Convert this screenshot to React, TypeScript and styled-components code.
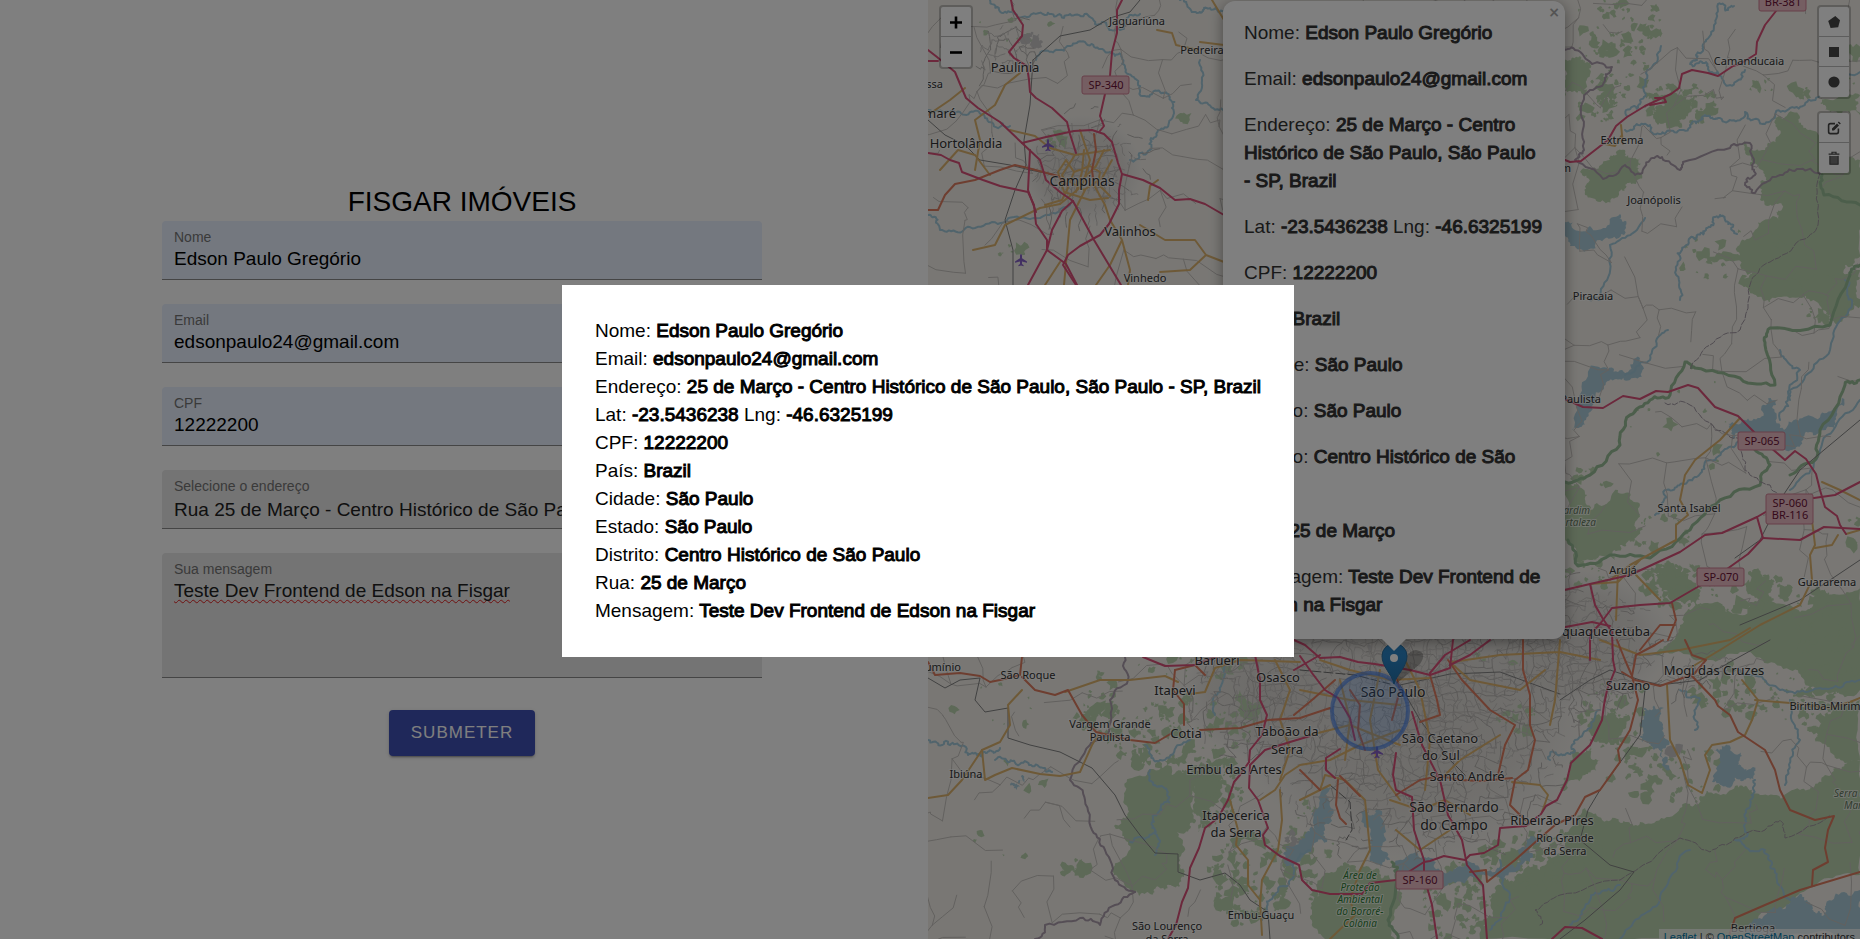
import React from "react";
import styled, { createGlobalStyle, css } from "styled-components";

/* ---------- data ---------- */

type Pair = [label: string, value: string];
type Entry = Pair[];

const entries: Entry[] = [
  [["Nome", "Edson Paulo Gregório"]],
  [["Email", "edsonpaulo24@gmail.com"]],
  [["Endereço", "25 de Março - Centro Histórico de São Paulo, São Paulo - SP, Brazil"]],
  [["Lat", "-23.5436238"], ["Lng", "-46.6325199"]],
  [["CPF", "12222200"]],
  [["País", "Brazil"]],
  [["Cidade", "São Paulo"]],
  [["Estado", "São Paulo"]],
  [["Distrito", "Centro Histórico de São Paulo"]],
  [["Rua", "25 de Março"]],
  [["Mensagem", "Teste Dev Frontend de Edson na Fisgar"]],
];

/* ---------- page ---------- */

const GlobalStyle = createGlobalStyle`
  *, *::before, *::after { box-sizing: border-box; }
  body {
    margin: 0;
    overflow: hidden;
    background: #fff;
    color: #000;
    font: 19px/28px "Liberation Sans", Arial, sans-serif;
  }
  p { margin: 0; }
`;

const Page = styled.div`
  display: grid;
  grid-template-columns: calc(50% - 2px) 1fr;
  min-height: 100vh;
`;

const FormPanel = styled.main`
  display: flex;
  align-items: center;
  justify-content: center;
  padding: 0 28px 0 24px;
`;

const Form = styled.form`
  display: flex;
  flex-direction: column;
  width: 100%;
  max-width: 600px;
`;

const Title = styled.h1`
  margin: 0;
  font-size: 28px;
  line-height: 38px;
  font-weight: 400;
  text-align: center;
`;

const Fields = styled.div`
  display: grid;
  gap: 24px;
  margin-bottom: 32px;
`;

const Field = styled.div<{ $filled?: boolean }>`
  display: flex;
  flex-direction: column;
  gap: 3px;
  padding: 8px 12px 9px;
  border-bottom: 1px solid #8a8a8a;
  border-radius: 4px 4px 0 0;
  background: ${(p) => (p.$filled ? "#e8f0fe" : "#e8e8e8")};
  color: ${(p) => (p.$filled ? "#000" : "#212121")};
`;

const Label = styled.label`
  font-size: 14px;
  line-height: 16px;
  color: #757575;
`;

const control = css`
  display: block;
  width: 100%;
  height: 22px;
  margin: 0;
  padding: 0;
  border: 0;
  outline: 0;
  background: none;
  color: inherit;
  font: inherit;
  line-height: 22px;
`;

const Input = styled.input`
  ${control}
`;

const Select = styled.select`
  ${control}
  padding-top: 2px;
  appearance: none;
`;

const Message = styled.textarea`
  ${control}
  height: 88px;
  resize: none;
  text-decoration: underline wavy #e02020 1px;
  text-decoration-skip-ink: none;
  text-underline-offset: 2px;
`;

const Submit = styled.button`
  align-self: center;
  height: 46px;
  padding: 0 22px;
  border: 0;
  border-radius: 4px;
  background: #3f51b5;
  color: #fff;
  font: inherit;
  font-size: 17px;
  letter-spacing: 1px;
  text-transform: uppercase;
  box-shadow: 0 3px 1px -2px rgba(0, 0, 0, 0.2), 0 2px 2px rgba(0, 0, 0, 0.14),
    0 1px 5px rgba(0, 0, 0, 0.12);
`;

/* ---------- details shared by popup and dialog ---------- */

const Value = styled.strong`
  font-weight: 400;
  -webkit-text-stroke: 1px currentColor;
`;

function Details({ entry }: { entry: Entry }) {
  return (
    <p>
      {entry.map(([label, value], i) => (
        <React.Fragment key={label}>
          {i > 0 && " "}
          {label}: <Value>{value}</Value>
        </React.Fragment>
      ))}
    </p>
  );
}

/* ---------- map ---------- */

const MapPanel = styled.section`
  position: relative;
  overflow: hidden;
  background: #f2efe9;
`;

const MapDrawing = styled.svg`
  position: absolute;
  inset: 0;
  width: 100%;
  height: 100%;
  font-family: "Noto Sans", sans-serif;
`;

const ControlColumn = styled.div<{ $side: "left" | "right" }>`
  position: absolute;
  top: 5px;
  ${(p) => (p.$side === "left" ? "left: 11px" : "right: 9px")};
  display: grid;
  gap: 12px;
`;

const ControlBar = styled.div`
  display: grid;
  width: 34px;
  border: 2px solid rgba(0, 0, 0, 0.22);
  border-radius: 4px;
  background: #fff;
  background-clip: padding-box;
`;

const ControlButton = styled.button`
  display: grid;
  place-items: center;
  width: 30px;
  height: 30px;
  padding: 0;
  border: 0;
  border-radius: 2px;
  background: none;
  color: #464646;
  & + & {
    border-radius: 0 0 2px 2px;
    box-shadow: 0 -1px #bbb;
  }
`;

const Popup = styled.article`
  position: absolute;
  top: 1px;
  left: 50%;
  transform: translateX(-50%);
  display: grid;
  gap: 18px;
  width: 342px;
  padding: 18px 20px 20px 21px;
  border-radius: 12px;
  background: #fff;
  color: #333;
  box-shadow: 0 3px 14px rgba(0, 0, 0, 0.4);
  &::after {
    content: "";
    position: absolute;
    top: 100%;
    left: 50%;
    transform: translateX(-50%);
    border: 12px solid transparent;
    border-top-color: #fff;
    border-bottom: 0;
  }
`;

const Close = styled.button`
  position: absolute;
  top: 2px;
  right: 2px;
  width: 18px;
  height: 18px;
  padding: 0;
  border: 0;
  background: none;
  color: #a8a8a8;
  font: bold 14px/18px "DejaVu Sans", sans-serif;
`;

const Attribution = styled.footer`
  position: absolute;
  right: 0;
  bottom: -6px;
  padding: 0 5px;
  background: rgba(255, 255, 255, 0.7);
  color: #333;
  font-size: 11px;
  line-height: 16px;
`;

const MapLink = styled.a`
  color: #0078a8;
  text-decoration: none;
`;

/* Seeded generator so that the landscape is the same on every render. */
function randomizer(seed: number) {
  let s = seed;
  return () => {
    s = (s * 1664525 + 1013904223) % 4294967296;
    return s / 4294967296;
  };
}

type Pt = [number, number];

const toPoints = (text: string): Pt[] =>
  text.split(" ").map((p) => p.split(",").map(Number) as Pt);

/* Breaks every segment in halves with a sideways shift, for coasts and rivers. */
function rough(text: string, amp: number, depth: number, closed: boolean) {
  const rnd = randomizer(text.length * 977 + toPoints(text)[0][0]);
  let pts = toPoints(text);
  if (closed) pts = [...pts, pts[0]];
  let a = amp;
  for (let d = 0; d < depth; d++) {
    const next: Pt[] = [pts[0]];
    for (let i = 1; i < pts.length; i++) {
      const [x0, y0] = pts[i - 1];
      const [x1, y1] = pts[i];
      const len = Math.hypot(x1 - x0, y1 - y0) || 1;
      const k = ((rnd() - 0.5) * 2 * Math.min(a, len * 0.4)) / len;
      next.push([(x0 + x1) / 2 - (y1 - y0) * k, (y0 + y1) / 2 + (x1 - x0) * k]);
      next.push(pts[i]);
    }
    pts = next;
    a *= 0.6;
  }
  return "M" + pts.map(([x, y]) => `${x.toFixed(1)} ${y.toFixed(1)}`).join("L") + (closed ? "Z" : "");
}

/* Small scattered woods: [centre x, centre y, radius x, radius y, count] */
function specks([cx, cy, rx, ry, n]: number[]) {
  const rnd = randomizer(cx * 31 + cy * 7);
  let d = "";
  for (let i = 0; i < n; i++) {
    const a = rnd() * 6.283;
    const r = Math.sqrt(rnd());
    const x = cx + Math.cos(a) * r * rx;
    const y = cy + Math.sin(a) * r * ry;
    const size = 1 + rnd() * rnd() * 8;
    for (let k = 0; k < 9; k++) {
      const t = (k / 9) * 6.283;
      const q = size * (0.4 + rnd() * 0.9);
      d += `${k ? "L" : "M"}${(x + Math.cos(t) * q).toFixed(1)} ${(y + Math.sin(t) * q).toFixed(1)}`;
    }
    d += "Z";
  }
  return d;
}

/* Street net on a jittered lattice, kept where `inside` gives a density. */
function streets(step: number, seed: number, inside: (x: number, y: number) => number) {
  const rnd = randomizer(seed);
  const cols = Math.ceil(960 / step);
  const rows = Math.ceil(960 / step);
  const node: Pt[][] = [];
  for (let r = 0; r <= rows; r++) {
    node.push([]);
    for (let c = 0; c <= cols; c++)
      node[r].push([920 + (c + (rnd() - 0.5) * 0.9) * step, (r + (rnd() - 0.5) * 0.9) * step - 8]);
  }
  let d = "";
  const link = (a: Pt, b: Pt) => {
    if (rnd() > inside(a[0], a[1])) return;
    const j = step * 0.35;
    const m1 = [(a[0] * 2 + b[0]) / 3 + (rnd() - 0.5) * j, (a[1] * 2 + b[1]) / 3 + (rnd() - 0.5) * j];
    const m2 = [(a[0] + b[0] * 2) / 3 + (rnd() - 0.5) * j, (a[1] + b[1] * 2) / 3 + (rnd() - 0.5) * j];
    d += "M" + [a, m1, m2, b].map((p) => `${p[0].toFixed(1)} ${p[1].toFixed(1)}`).join("L");
  };
  for (let r = 0; r < rows; r++)
    for (let c = 0; c < cols; c++) {
      link(node[r][c], node[r][c + 1]);
      link(node[r][c], node[r + 1][c]);
    }
  return d;
}

const bump = (x: number, y: number, cx: number, cy: number, rx: number, ry: number) =>
  Math.max(0, 1.25 - Math.hypot((x - cx) / rx, (y - cy) / ry));

const cityDensity = (x: number, y: number) =>
  Math.max(
    bump(x, y, 1410, 700, 150, 140),
    bump(x, y, 1270, 690, 80, 70),
    bump(x, y, 1560, 650, 90, 70),
    bump(x, y, 1082, 165, 55, 50) * 0.9,
    bump(x, y, 1003, 45, 30, 30) * 0.7,
    bump(x, y, 1700, 670, 40, 20) * 0.7,
  );

const forests = [
  "1745,140 1765,150 1780,130 1775,118 1800,118 1808,130 1832,150 1860,160 1860,255 1845,265 1842,299 1815,292 1770,300 1745,285 1752,270 1705,263 1740,255 1755,230 1780,220 1782,205 1760,200 1770,180 1750,165",
  "1820,98 1860,95 1860,115 1830,112",
  "1580,172 1610,160 1625,150 1640,158 1642,175 1625,185 1612,198 1585,195",
  "1655,108 1680,97 1700,95 1690,110 1670,125 1655,120",
  "1562,60 1580,56 1590,75 1578,95 1562,98",
  "1742,280 1800,280 1790,292 1770,302 1755,292",
  "1800,280 1860,270 1860,300 1840,322 1822,310",
  "1565,482 1577,484 1590,510 1618,490 1640,505 1638,535 1620,545 1615,560 1575,562 1565,540",
  "1655,575 1670,562 1690,580 1700,600 1670,600",
  "1748,572 1770,580 1772,600 1755,598",
  "1655,655 1680,625 1705,603 1740,615 1765,600 1800,612 1822,590 1860,585 1860,690 1820,688 1790,670 1740,652 1700,660",
  "1860,760 1850,762 1825,775 1800,790 1760,795 1735,786 1700,796 1680,808 1640,822 1615,818 1585,808 1565,845 1540,870 1515,880 1490,900 1480,939 1738,939 1765,912 1800,893 1860,875",
  "1830,750 1815,740 1820,725 1860,700 1860,760",
  "1590,722 1615,712 1630,720 1622,745 1600,740",
  "1575,750 1590,745 1600,760 1585,775 1560,790 1570,770",
  "1132,778 1170,774 1200,784 1196,820 1177,832 1180,868 1180,886 1165,890 1150,894 1130,890 1113,872 1128,842 1114,826 1128,810",
  "1190,768 1230,758 1222,785 1212,815 1198,832 1194,800",
  "1320,880 1345,862 1372,870 1395,880 1400,905 1395,939 1325,939 1312,910",
  "1240,690 1262,700 1255,725 1240,712",
];

const woods = [
  [1620, 25, 50, 28, 45], [1610, 70, 40, 40, 60], [1680, 105, 40, 22, 60], [1600, 105, 25, 20, 25],
  [1760, 90, 14, 14, 10], [1845, 60, 16, 40, 24], [1740, 260, 70, 30, 30], [1800, 90, 10, 8, 6],
  [1010, 30, 50, 12, 10], [1056, 140, 12, 10, 12], [1010, 250, 14, 12, 10], [1180, 120, 8, 5, 3],
  [1180, 735, 70, 38, 130], [1100, 720, 26, 20, 30], [1100, 700, 20, 30, 20], [1075, 870, 12, 14, 12],
  [1215, 790, 28, 40, 90], [1250, 880, 44, 45, 120], [1310, 850, 24, 50, 50], [1190, 665, 60, 14, 20],
  [1590, 575, 28, 18, 20], [1680, 585, 40, 24, 70], [1760, 600, 60, 24, 60], [1830, 640, 36, 50, 80],
  [1620, 720, 40, 40, 60], [1670, 775, 60, 30, 70], [1540, 860, 60, 30, 110], [1460, 900, 40, 40, 90],
  [1740, 690, 50, 30, 60], [1815, 700, 40, 30, 60], [1520, 720, 24, 14, 14], [1480, 662, 40, 8, 6],
  [1660, 535, 30, 20, 20], [1850, 530, 14, 20, 8], [1830, 300, 30, 24, 26], [1700, 420, 80, 50, 12],
  [1590, 480, 20, 14, 8], [1010, 700, 60, 30, 8], [1020, 820, 60, 60, 7],
];

const lakes = [
  "1322,790 1331,788 1332,815 1327,842 1312,848 1292,866 1284,862 1300,840 1316,830",
  "1360,812 1376,810 1386,832 1390,860 1380,868 1372,845",
  "1396,868 1420,858 1440,870 1470,862 1500,868 1520,855 1530,836 1538,838 1530,862 1505,880 1470,876 1440,888 1420,878 1400,885",
  "1644,708 1664,708 1668,740 1670,770 1658,748 1642,742 1640,725",
  "1714,750 1730,746 1738,765 1756,768 1750,780 1735,776 1712,782",
  "1728,424 1760,418 1776,400 1784,430 1815,418 1842,398 1836,424 1810,432 1792,450 1782,434 1750,440 1732,440",
  "1564,222 1590,226 1620,214 1626,228 1600,240 1570,246",
  "1590,368 1618,372 1640,358 1630,380 1604,386 1586,420 1572,430",
  "1740,939 1765,915 1790,903 1808,902 1814,912 1822,916 1826,904 1860,890 1860,939",
  "1010,785 1022,775 1026,782 1016,790",
];

const rivers = [
  "990,0 1010,12 1045,15 1070,14 1095,24 1120,30 1140,14",
  "928,110 960,112 985,118 1010,126",
  "928,215 940,230 975,228 1020,218 1070,205",
  "1036,60 1060,50 1085,42 1110,52 1125,66 1140,90 1160,92 1172,108 1160,130 1150,150 1130,160",
  "1180,0 1200,12 1210,8 1228,14",
  "1200,60 1196,100 1225,110",
  "1734,6 1718,4 1706,40 1696,55 1690,64 1706,62 1712,72 1725,84 1745,70",
  "1661,46 1645,80 1640,104 1627,116",
  "1625,130 1650,125 1665,134 1690,125 1705,115 1720,118 1745,112 1765,124 1790,108 1820,96 1860,72",
  "1645,218 1610,245 1600,300 1590,300",
  "1720,215 1706,230 1690,238 1680,260 1680,300",
  "1737,234 1725,220 1720,216",
  "1668,330 1650,360 1625,375",
  "1845,280 1852,300 1830,350 1790,390 1780,420",
  "1860,400 1820,450 1790,490",
  "1780,350 1800,370 1790,400",
  "1740,440 1710,460 1690,480 1665,490 1655,515",
  "928,740 950,745 968,755 985,752 1000,748",
  "995,760 1020,764 1045,768 1052,772",
  "1150,770 1155,785 1168,792 1162,810 1155,830 1155,855",
  "1155,830 1130,842",
  "1190,740 1160,760 1145,745",
  "1230,662 1220,690 1215,715",
  "1310,850 1290,880 1270,900 1262,920",
  "1600,710 1575,740 1565,755 1550,760",
  "1680,690 1700,700 1695,730",
  "1755,780 1750,800 1745,830 1735,840 1765,850 1775,870 1790,900",
  "1790,700 1800,740 1785,785",
  "1740,670 1780,690 1820,688 1860,680",
  "1500,860 1510,900 1490,930",
  "1620,885 1590,900 1570,925",
  "1690,850 1660,900 1620,939",
];

const motorways = [
  "M1011 0L1013 10L1023 25L1022 36L1009 52L1014 58L1027 66L1029 80L1030 92L1036 98L1052 108L1067 122L1070 134L1076 153",
  "M928 50L937 57L955 72L960 84L966 98L978 108L1000 122L1022 143L1040 160L1046 180L1060 192L1073 201L1094 240L1121 285",
  "M928 61H938",
  "M1122 0L1117 10L1117 33L1112 52L1110 76M1105 94L1100 116L1104 126L1100 131",
  "M1022 143L1046 137L1074 131L1092 130L1104 134L1112 142L1118 163L1122 174L1119 190L1119 204L1109 224L1100 235L1080 246L1068 255L1063 265L1076 285",
  "M1122 174L1143 180L1160 188L1175 200L1190 199L1205 204L1224 215L1260 240",
  "M928 153L941 155L950 160L959 163L962 172L983 180L1000 186L1028 192L1034 205L1036 224L1047 240L1047 250L1028 285",
  "M1030 150L1028 190L1036 212M1073 201L1062 211L1052 230L1047 250L1066 264L1077 285",
  "M1776 11L1765 25L1757 42L1756 54L1740 64L1733 66L1718 76L1708 73L1692 70L1682 74L1679 88L1671 94L1660 99L1645 106L1627 117L1616 126L1608 140L1581 161L1570 162L1560 158",
  "M1655 98H1664L1666 102L1650 105",
  "M1560 397L1583 407L1603 408L1623 396L1640 399L1656 391L1668 392L1688 385L1698 388L1715 407L1738 416L1762 440L1785 460L1795 451L1806 459L1816 474L1820 490L1825 507L1837 516L1840 525L1846 534",
  "M1560 591L1590 584L1630 575L1680 552L1705 535L1722 533L1757 517L1790 498L1814 498L1835 495L1860 482",
  "M1757 517L1763 538L1748 554L1720 574L1670 603L1640 605L1612 608L1600 624L1590 634L1590 660",
  "M1763 538L1800 540L1824 527L1860 529M1590 584L1595 605L1603 619L1612 632L1613 660L1615 670L1607 690L1604 705L1602 720L1590 745L1571 763L1567 780L1557 800L1546 806L1541 814L1526 826L1500 828L1498 845L1484 853L1470 855L1465 860L1444 856L1430 861L1424 862L1396 880",
  "M1560 628L1592 622L1610 626M1424 860L1424 876L1432 905L1437 939",
  "M1396 753L1393 775L1396 790L1412 797L1414 830L1424 860",
  "M1412 712L1422 745L1440 780L1448 815L1462 840L1467 865L1483 885L1487 939",
  "M1396 880L1370 883L1362 894L1330 894L1312 890L1302 880L1299 865L1280 856L1265 845L1263 835L1268 828L1258 800L1249 788L1250 765L1265 750L1290 742L1310 736",
  "M1249 762L1240 775L1234 782L1228 800L1218 818L1205 828L1199 848L1190 868L1188 888L1182 902L1176 925L1168 939",
  "M1143 657L1165 666L1195 665L1215 657L1245 650M1255 655L1260 680L1260 700L1267 715L1262 735L1250 750L1249 762",
  "M1294 640L1305 645L1320 658L1340 657L1358 662L1375 664L1410 670L1430 675L1450 668L1453 640M1430 673L1445 655L1470 640M1300 656L1312 673L1325 690L1338 698L1350 718L1355 740",
  "M1340 749L1326 758L1326 770L1335 778",
  "M1552 939L1565 927L1582 928L1602 939",
  "M1450 665L1470 655L1490 640M1294 670L1320 655",
];

const trunks = [
  "M928 210L938 210L945 195L955 184L975 180L1000 170L1015 165L1028 168L1058 176L1068 186",
  "M1094 134L1096 150L1092 170L1094 185",
  "M928 662L935 675L960 673L980 676L990 682L1000 680L1020 675L1022 657",
  "M1022 677L1035 690L1055 695L1068 690L1082 715L1096 732L1130 740L1155 743L1172 733",
  "M1200 730L1240 728L1268 720L1300 718L1330 708M1175 670L1173 690L1184 704L1184 725",
  "M1175 670L1195 665L1205 675M1294 715L1312 700L1335 680",
  "M1523 640V670L1530 695L1530 725L1535 740L1528 770L1515 780L1510 805L1525 820",
  "M1448 660L1462 680L1490 710L1515 725L1505 745L1498 775",
  "M1430 675L1437 700L1440 715L1420 722",
  "M1617 640L1625 660L1632 676L1638 700L1630 730L1618 750L1620 762L1600 790L1585 797L1575 815L1555 825L1540 838L1515 860L1487 882L1486 870L1470 872",
  "M1632 676L1636 655L1655 645L1663 640M1685 640L1692 655L1706 660L1694 674L1660 686L1635 680L1622 672",
  "M1690 674L1715 700L1718 706L1730 715L1738 732L1765 750L1775 770L1780 790L1790 810L1815 820L1834 816L1828 830L1825 848L1828 862L1813 870L1812 886",
  "M1728 939L1735 918L1765 905L1800 890L1860 872",
  "M1672 603L1676 620L1668 640M1640 650L1660 625L1675 625",
  "M1300 770L1320 790M1338 780L1336 805L1340 818L1346 824M1340 776L1360 796",
  "M1350 690L1360 705L1358 730L1365 750M1390 655L1400 690L1392 720",
  "M1396 795L1420 780L1440 776L1460 780L1480 781L1512 778",
];

const secondary = [
  "M928 115L950 100L965 88M975 170L980 140L975 120L995 105L1005 85L1020 73",
  "M940 170L958 150L975 155L990 175M973 250L995 245L1005 225L1040 208L1060 204",
  "M1010 130L1035 136L1050 148L1075 155L1110 150M1075 155L1062 175L1068 188L1062 200L1045 205",
  "M1080 130L1090 160L1082 186L1060 204M1094 185L1105 205L1110 220L1122 240L1110 265L1096 285M1122 240L1130 270L1128 285",
  "M1066 160L1074 172L1070 182L1084 190L1102 178L1112 160M1074 172L1090 166L1100 172L1098 184L1110 196M1066 160L1058 172L1064 192L1090 200L1108 198M1084 150L1082 172L1076 192M1104 150L1096 166L1084 178",
  "M1140 225L1165 240L1195 240L1206 255L1224 262M1160 272L1190 270L1206 255",
  "M1085 190L1070 220L1064 285M1148 200L1150 186L1158 180",
  "M1157 30L1172 33L1176 45L1198 50M1200 42L1224 45M1212 0L1224 20M1045 285L1060 262",
  "M1623 144L1621 125M1605 144L1615 146L1622 135",
  "M1740 418L1720 440L1695 460L1685 475L1680 500L1688 515L1676 525L1676 540L1630 565L1610 580",
  "M1590 584L1618 582L1640 560M1636 575L1660 600M1618 570L1616 620",
  "M1822 482L1840 490L1860 500M1812 520L1815 545L1810 555L1812 580L1800 605L1760 625L1720 650L1690 668",
  "M1815 548L1832 545L1838 535M1846 534L1860 530",
  "M928 798L948 795L962 780L972 765L982 750L1000 742L1010 725L1008 705L1022 690",
  "M982 750L985 780L995 775L1012 768L1040 774L1060 776L1080 772L1092 745L1098 735",
  "M1065 692L1100 680L1130 680L1165 676L1178 682M1190 694L1205 692L1215 668L1240 660L1300 662",
  "M1230 800L1238 830L1236 845L1248 860L1248 885L1260 900L1262 935",
  "M1260 800L1275 790L1285 775L1300 765L1330 760L1360 745L1400 730",
  "M1280 790L1282 820L1278 850L1262 880L1260 905",
  "M1320 790L1325 775L1345 780L1365 800L1370 850L1360 870L1350 900L1355 915L1330 939",
  "M1667 685L1670 740L1680 760L1688 785L1702 793L1710 770L1705 755L1712 745L1730 742L1745 735L1752 720L1758 700L1742 680",
  "M1755 700L1790 703L1830 708L1850 702L1860 698",
  "M1452 662L1500 655L1560 652L1600 660M1560 640L1555 700L1550 725",
  "M1452 664L1470 680L1520 690L1545 670M1400 650L1420 690L1430 740L1425 790",
  "M1390 800L1420 810L1445 800L1470 815M1396 830L1420 850L1450 830M1440 780L1460 760L1500 735",
  "M1320 660L1350 670L1390 680L1430 678M1300 690L1350 700L1400 705M1310 735L1350 725L1400 745",
  "M1340 680L1350 720L1345 760M1380 670L1370 720L1378 770L1400 800",
  "M1512 782L1540 785L1548 795L1542 812M1600 640L1640 655L1680 650L1730 640L1750 628",
  "M1300 800L1330 785M1275 660L1290 690L1280 720L1290 750L1280 780",
];

const railways = [
  "M1033 60L1030 105L1024 140L1026 165L1015 190L1005 220L1013 250L1013 285",
  "M928 120L945 135L965 145L980 160L1010 165L1030 170L1055 175",
  "M1140 0L1130 12L1110 18L1090 30L1060 36L1050 45L1033 60",
  "M928 678L945 688L960 680L980 678L975 700L985 712L1008 708L1008 738L1030 745L1060 752L1092 768L1115 795L1125 815L1140 835L1155 853L1178 854L1178 872L1200 880L1225 873L1240 885L1250 900L1268 912L1270 939",
  "M1860 420L1800 470L1780 500L1760 540L1735 558M1860 560L1800 600L1740 625",
  "M1560 700L1590 680L1610 670L1640 680L1660 685L1700 680L1730 662L1770 640",
  "M1645 690L1640 735L1600 790L1588 810L1580 840L1610 865L1634 872L1620 890L1585 920L1560 939",
  "M1400 685L1420 720L1450 760L1465 775M1400 685L1450 674L1500 672L1560 694",
];

const tunnels = "M1330 785L1350 802L1352 830L1346 840M1300 670L1355 675L1390 684";

const borders = [
  "1560,50 1575,50 1592,64 1612,67 1605,78 1590,90 1582,118 1584,150 1575,160 1603,179 1625,165 1640,174 1650,160 1662,157 1680,170 1683,162 1730,148 1750,143 1752,165 1755,175 1745,185 1755,193 1780,175 1800,169 1820,173",
  "1125,657 1128,680 1110,700 1108,735 1090,745 1070,780 1085,800 1092,830 1105,850 1115,880 1135,892",
  "1135,892 1115,905 1100,925 1080,918 1045,925 1035,939",
];

const dashedBorders = [
  "1820,173 1818,225 1800,240 1770,262 1750,285 1740,330 1710,345 1690,370",
  "1540,925 1535,910 1560,895 1620,880 1680,838 1710,852 1735,838 1765,830 1780,820 1785,838 1830,815",
  "1665,403 1690,405 1715,430 1740,440 1745,470 1770,485 1780,500",
];

const parkEdges = [
  "1860,265 1850,275 1830,325 1770,328 1765,345 1775,385 1740,378 1695,368 1685,362 1670,395 1650,400 1630,415 1620,445 1590,475 1565,482",
  "1822,175 1824,195 1860,205",
  "1568,540 1578,566 1610,555 1650,558 1690,530 1720,500 1760,485 1770,465 1755,450",
  "1860,380 1845,385 1820,430 1815,460 1790,475",
  "1392,862 1396,875 1388,920 1398,939",
];

type MapLabel = [x: number, y: number, size: number, text: string, anchor?: "start" | "middle" | "end"];

const towns: MapLabel[] = [
  [1137, 25, 11, "Jaguariúna"], [1202, 54, 11, "Pedreira"], [1015, 72, 13, "Paulínia"],
  [943, 88, 11, "Nova Odessa", "end"], [956, 118, 13, "Sumaré", "end"], [966, 148, 13, "Hortolândia"],
  [1082, 186, 14, "Campinas"], [1130, 236, 13, "Valinhos"], [1145, 282, 11, "Vinhedo"],
  [1749, 65, 11, "Camanducaia"], [1622, 144, 11, "Extrema"], [1654, 204, 11, "Joanópolis"],
  [1571, 172, 11, "Vargem", "end"], [1593, 300, 11, "Piracaia"],
  [1601, 403, 11, "Paulista", "end"],
  [1689, 512, 11, "Santa Isabel"], [1623, 574, 11, "Arujá"], [1827, 586, 11, "Guararema"],
  [1650, 636, 13, "Itaquaquecetuba", "end"], [961, 671, 11, "Alumínio", "end"],
  [1028, 679, 11, "São Roque"], [1217, 665, 13, "Barueri"], [1278, 682, 13, "Osasco"],
  [1175, 695, 13, "Itapevi"], [1110, 728, 11, "Vargem Grande"], [1110, 741, 11, "Paulista"],
  [1186, 738, 13, "Cotia"], [1287, 736, 13, "Taboão da"], [1287, 754, 13, "Serra"],
  [1234, 774, 13, "Embu das Artes"], [966, 778, 11, "Ibiúna"], [1236, 820, 13, "Itapecerica"],
  [1236, 837, 13, "da Serra"], [1261, 919, 11, "Embu-Guaçu"], [1167, 930, 11, "São Lourenço"],
  [1167, 943, 11, "da Serra"], [1393, 697, 14, "São Paulo"], [1440, 743, 13, "São Caetano"],
  [1441, 760, 13, "do Sul"], [1467, 781, 13, "Santo André"], [1454, 812, 14, "São Bernardo"],
  [1454, 830, 14, "do Campo"], [1552, 825, 13, "Ribeirão Pires"], [1565, 842, 11, "Rio Grande"],
  [1565, 855, 11, "da Serra"], [1628, 690, 13, "Suzano"], [1714, 675, 13, "Mogi das Cruzes"],
  [1825, 710, 11, "Biritiba-Mirim"], [1753, 932, 11, "Bertioga"],
];

const parks: MapLabel[] = [
  [1360, 879, 10, "Área de"], [1360, 891, 10, "Proteção"], [1360, 903, 10, "Ambiental"],
  [1360, 915, 10, "do Bororé-"], [1360, 927, 10, "Colônia"],
];

const hills: MapLabel[] = [
  [1590, 514, 10, "Jardim", "end"], [1596, 526, 10, "Fortaleza", "end"],
  [1834, 797, 10, "Serra do", "start"], [1844, 809, 10, "Mar", "start"],
];

const shields: [x: number, y: number, lines: string[]][] = [
  [1082, 76, ["SP-340"]], [1759, -7, ["BR-381"]], [1738, 432, ["SP-065"]],
  [1766, 494, ["SP-060", "BR-116"]], [1697, 568, ["SP-070"]], [1396, 871, ["SP-160"]],
];

const airports: Pt[] = [[1048, 145], [1021, 260], [1377, 752]];

const plane =
  "M0 -6C.7 -6 1 -5 1 -4V-1.8L6 1.4V2.8L1 1.4V4L2.6 5.2V6.2L0 5.6L-2.6 6.2V5.2L-1 4V1.4L-6 2.8V1.4L-1 -1.8V-4C-1 -5 -.7 -6 0 -6Z";

function Labels({ items, fill, italic }: { items: MapLabel[]; fill: string; italic?: boolean }) {
  return (
    <g
      fill={fill}
      fontStyle={italic ? "italic" : "normal"}
      stroke="#fff"
      strokeOpacity={0.6}
      strokeWidth={2}
      strokeLinejoin="round"
      paintOrder="stroke"
    >
      {items.map(([x, y, size, text, anchor = "middle"]) => (
        <text key={text + y} x={x} y={y} fontSize={size} textAnchor={anchor}>
          {text}
        </text>
      ))}
    </g>
  );
}

const lattice = {
  country: streets(34, 11, () => 0.42),
  town: streets(13, 5, (x, y) => cityDensity(x, y) * 0.9),
  block: streets(7, 23, (x, y) => cityDensity(x, y) * 0.75 - 0.1),
};

function MapCanvas() {
  return (
    <MapDrawing
      viewBox="928 0 932 939"
      preserveAspectRatio="xMidYMin slice"
      role="img"
      aria-label="Mapa da região de São Paulo"
    >
      <defs>
        <radialGradient id="urban">
          <stop offset="0" stopColor="#d9d6d2" />
          <stop offset="0.7" stopColor="#dedbd6" stopOpacity="0.8" />
          <stop offset="1" stopColor="#e0dfdf" stopOpacity="0" />
        </radialGradient>
        <linearGradient id="pin" x1="0" y1="0" x2="0" y2="1">
          <stop offset="0" stopColor="#2e8bd0" />
          <stop offset="1" stopColor="#2070a8" />
        </linearGradient>
      </defs>
      <g fill="url(#urban)">
        <ellipse cx="1410" cy="700" rx="180" ry="160" />
        <ellipse cx="1270" cy="690" rx="90" ry="70" />
        <ellipse cx="1082" cy="170" rx="60" ry="55" />
        <ellipse cx="1570" cy="640" rx="100" ry="70" />
      </g>
      <g fill="#bad3ae">
        {forests.map((f) => <path key={f} d={rough(f, 7, 4, true)} />)}
        {woods.map((w) => <path key={w.join()} d={specks(w)} />)}
      </g>
      <g fill="#c9c7c7">
        <path d={specks([1028, 40, 14, 8, 12])} />
        <path d={specks([1400, 650, 60, 20, 14])} />
        <path d={specks([1298, 838, 12, 12, 10])} />
        <path d={specks([1674, 750, 8, 4, 4])} />
      </g>
      <g fill="#aacbd8">{lakes.map((l) => <path key={l} d={rough(l, 8, 4, true)} />)}</g>
      <g fill="none" strokeLinejoin="round" strokeLinecap="round">
        <g stroke="#a3c8d8" strokeWidth="2">
          {rivers.map((r) => <path key={r} d={rough(r, 6, 4, false)} />)}
        </g>
        <path d={lattice.country} stroke="#c6c2be" strokeWidth="1" />
        <path d={lattice.town} stroke="#b8b5b2" strokeWidth="1" />
        <path d={lattice.block} stroke="#c8c5c2" strokeWidth="1" />
        <g stroke="#98bd97" strokeWidth="3">
          {parkEdges.map((b) => <path key={b} d={rough(b, 4, 3, false)} />)}
        </g>
        <g stroke="#ab9cab" strokeWidth="2">
          {borders.map((b) => <path key={b} d={rough(b, 4, 3, false)} />)}
        </g>
        <g stroke="#a096a0" strokeWidth="1" strokeDasharray="6 2">
          {dashedBorders.map((b) => <path key={b} d={rough(b, 4, 3, false)} />)}
        </g>
        <g stroke="#838383" strokeWidth="1">{railways.map((r) => <path key={r} d={r} />)}</g>
        <path d={tunnels} stroke="#6f6f6f" strokeWidth="1" strokeDasharray="9 3" />
        <g stroke="#dcb36f" strokeWidth="2">{secondary.map((r) => <path key={r} d={r} />)}</g>
        <g stroke="#dd7c60" strokeWidth="2">{trunks.map((r) => <path key={r} d={r} />)}</g>
        <g stroke="#d85078" strokeWidth="2">{motorways.map((r) => <path key={r} d={r} />)}</g>
      </g>
      <g fill="#8461c4">
        {airports.map(([x, y]) => <path key={x} d={plane} transform={`translate(${x} ${y})`} />)}
      </g>
      {shields.map(([x, y, lines]) => (
        <g key={lines[0]}>
          <rect x={x} y={y} width="47" height={6 + 12 * lines.length} rx="2" fill="#eabcc5" stroke="#cf7f92" />
          <g fill="#6b1236" fontSize="11" textAnchor="middle">
            {lines.map((line, i) => (
              <text key={line} x={x + 24} y={y + 13 + 12 * i}>{line}</text>
            ))}
          </g>
        </g>
      ))}
      <Labels items={towns} fill="#333" />
      <Labels items={parks} fill="#2f7d35" italic />
      <Labels items={hills} fill="#66795f" italic />
      <circle cx="1370" cy="711" r="38" fill="#3388ff" fillOpacity="0.2" stroke="#3a78e8" strokeOpacity="0.6" strokeWidth="4" />
      <path d="M1396 684L1420 664Q1428 652 1416 650Q1404 650 1396 684Z" fill="#000" opacity="0.25" />
      <path
        d="M1394 684C1392 674 1382 667 1382 656A12 12 0 0 1 1407 656C1407 667 1397 674 1394 684Z"
        fill="url(#pin)"
        stroke="#2a6f9f"
      />
      <circle cx="1394" cy="658" r="4" fill="#fff" />
    </MapDrawing>
  );
}

/* ---------- control icons ---------- */

const Glyph = styled.svg`
  display: block;
  width: 16px;
  height: 16px;
  fill: currentColor;
`;

const glyphs = {
  zoomIn: <path d="M6.7 2.5h2.6v4.7H14v2.6H9.3v4.7H6.7V9.8H2V7.2h4.7Z" fill="#000" />,
  zoomOut: <path d="M2 7.2h12v2.6H2Z" fill="#000" />,
  polygon: <path d="M9.3 2 14 6.2 12.2 13.2 4.6 14 2.2 7Z" />,
  rectangle: <path d="M3 3h10v10H3Z" />,
  circle: <circle cx="8" cy="8" r="5.6" />,
  edit: (
    <>
      <path
        d="M9 3.6H4.4Q2.6 3.6 2.6 5.4v6.4q0 1.8 1.8 1.8h6.2q1.8 0 1.8-1.8V8.6"
        fill="none"
        stroke="currentColor"
        strokeWidth="1.6"
      />
      <path d="M6 8.6 11 3.4l2 2L8 10.6H6ZM11.8 2.6 12.8 1.6l2 2-1 1Z" />
    </>
  ),
  trash: (
    <>
      <path d="M2.6 3.4h10.8v1.4H2.6ZM5.4 3.4V1.8h5.2v1.6H9.4V2.8H6.6v.6Z" />
      <path d="M3.6 6h8.8v8.4H3.6Z" opacity="0.75" />
      <path d="M3.4 5.8h1v8.6h-1ZM11.6 5.8h1v8.6h-1ZM3.4 13.8h9.2v1H3.4Z" />
    </>
  ),
};

function Tool({ name, label }: { name: keyof typeof glyphs; label: string }) {
  return (
    <ControlButton type="button" aria-label={label}>
      <Glyph viewBox="0 0 16 16" aria-hidden="true">{glyphs[name]}</Glyph>
    </ControlButton>
  );
}

/* ---------- dialog ---------- */

const Overlay = styled.div`
  position: fixed;
  inset: 0;
  display: flex;
  align-items: center;
  justify-content: center;
  padding: 3px 4px 0 0;
  background: rgba(0, 0, 0, 0.5);
`;

const Dialog = styled.section`
  padding: 32px 33px;
  background: #fff;
`;

export default function App() {
  return (
    <>
      <GlobalStyle />
      <Page>
        <FormPanel>
          <Form onSubmit={(e) => e.preventDefault()}>
            <Title>FISGAR IMÓVEIS</Title>
            <Fields>
              <Field $filled>
                <Label htmlFor="name">Nome</Label>
                <Input id="name" defaultValue="Edson Paulo Gregório" />
              </Field>
              <Field $filled>
                <Label htmlFor="email">Email</Label>
                <Input id="email" type="email" defaultValue="edsonpaulo24@gmail.com" />
              </Field>
              <Field $filled>
                <Label htmlFor="cpf">CPF</Label>
                <Input id="cpf" defaultValue="12222200" />
              </Field>
              <Field>
                <Label htmlFor="address">Selecione o endereço</Label>
                <Select id="address">
                  <option>Rua 25 de Março - Centro Histórico de São Paulo</option>
                </Select>
              </Field>
              <Field>
                <Label htmlFor="message">Sua mensagem</Label>
                <Message id="message" defaultValue="Teste Dev Frontend de Edson na Fisgar" />
              </Field>
            </Fields>
            <Submit type="submit">Submeter</Submit>
          </Form>
        </FormPanel>
        <MapPanel>
          <MapCanvas />
          <ControlColumn $side="left">
            <ControlBar>
              <Tool name="zoomIn" label="Aproximar" />
              <Tool name="zoomOut" label="Afastar" />
            </ControlBar>
          </ControlColumn>
          <ControlColumn $side="right">
            <ControlBar>
              <Tool name="polygon" label="Desenhar polígono" />
              <Tool name="rectangle" label="Desenhar retângulo" />
              <Tool name="circle" label="Desenhar círculo" />
            </ControlBar>
            <ControlBar>
              <Tool name="edit" label="Editar camadas" />
              <Tool name="trash" label="Apagar camadas" />
            </ControlBar>
          </ControlColumn>
          <Popup>
            {entries.map((entry) => <Details key={entry[0][0]} entry={entry} />)}
            <Close type="button" aria-label="Fechar">×</Close>
          </Popup>
          <Attribution>
            <MapLink href="#leaflet">Leaflet</MapLink> | © <MapLink href="#osm">OpenStreetMap</MapLink> contributors
          </Attribution>
        </MapPanel>
      </Page>
      <Overlay>
        <Dialog role="dialog" aria-modal="true" aria-label="Dados enviados">
          {entries.map((entry) => <Details key={entry[0][0]} entry={entry} />)}
        </Dialog>
      </Overlay>
    </>
  );
}
